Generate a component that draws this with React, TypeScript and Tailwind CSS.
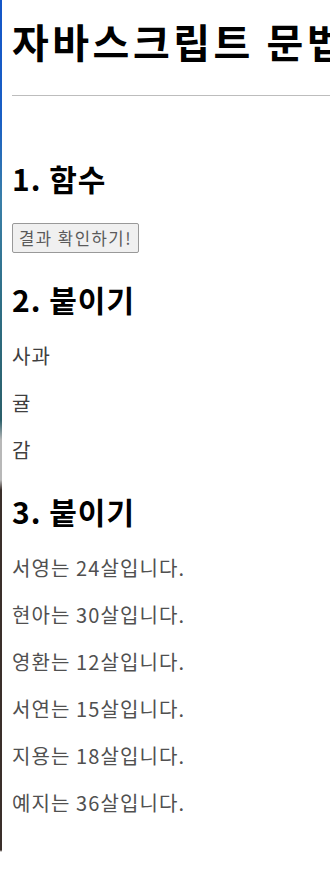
const fruits = ["사과", "귤", "감"]

const people = [
  { name: "서영", age: 24 },
  { name: "현아", age: 30 },
  { name: "영환", age: 12 },
  { name: "서연", age: 15 },
  { name: "지용", age: 18 },
  { name: "예지", age: 36 },
]

export default function App() {
  return (
    <div className="flex min-h-[879px] w-[330px] overflow-hidden bg-white font-['Noto_Sans_CJK_KR','Noto_Sans',sans-serif]">
      <div className="w-[2px] shrink-0 bg-[linear-gradient(to_bottom,#1456c8_0px,#1a5fc4_120px,#3a7fa8_200px,#2f6f86_300px,#2b5f6a_420px,#b8b8b8_440px,#b8b8b8_480px,#3a2f2a_490px,#3a2f2a_850px,#ffffff_852px)]"></div>
      <div className="flex min-w-0 flex-1 flex-col pl-[10px]">
        <h1 className="mt-[15px] whitespace-nowrap text-[40px] font-bold leading-[52px] tracking-[3.5px] text-black">
          자바스크립트 문법 정리
        </h1>
        <hr className="mt-[28px] border-t border-[#bdbdbd]" />

        <h2 className="mt-[62px] text-[30px] font-bold leading-[40px] tracking-[1px] text-black">1. 함수</h2>
        <div className="mt-[25px]">
          <button className="h-[30px] w-[127px] rounded-[2px] border border-[#999] bg-[#f0f0f0] text-[16.7px] leading-none tracking-[1.5px] text-[#5a5a5a]">
            결과 확인하기!
          </button>
        </div>

        <h2 className="mt-[26px] text-[30px] font-bold leading-[40px] tracking-[1px] text-black">2. 붙이기</h2>
        <div className="mt-[22.5px] flex flex-col gap-[20px]">
          {fruits.map((f) => (
            <p key={f} className="text-[20px] leading-[27px] tracking-[1px] text-[#404040]">
              {f}
            </p>
          ))}
        </div>

        <h2 className="mt-[28.5px] text-[30px] font-bold leading-[40px] tracking-[1px] text-black">3. 붙이기</h2>
        <div className="mt-[22.5px] flex flex-col gap-[20px]">
          {people.map((p) => (
            <p key={p.name} className="text-[20px] leading-[27px] tracking-[1.1px] text-[#505050]">
              {p.name}는 {p.age}살입니다.
            </p>
          ))}
        </div>
      </div>
    </div>
  )
}
